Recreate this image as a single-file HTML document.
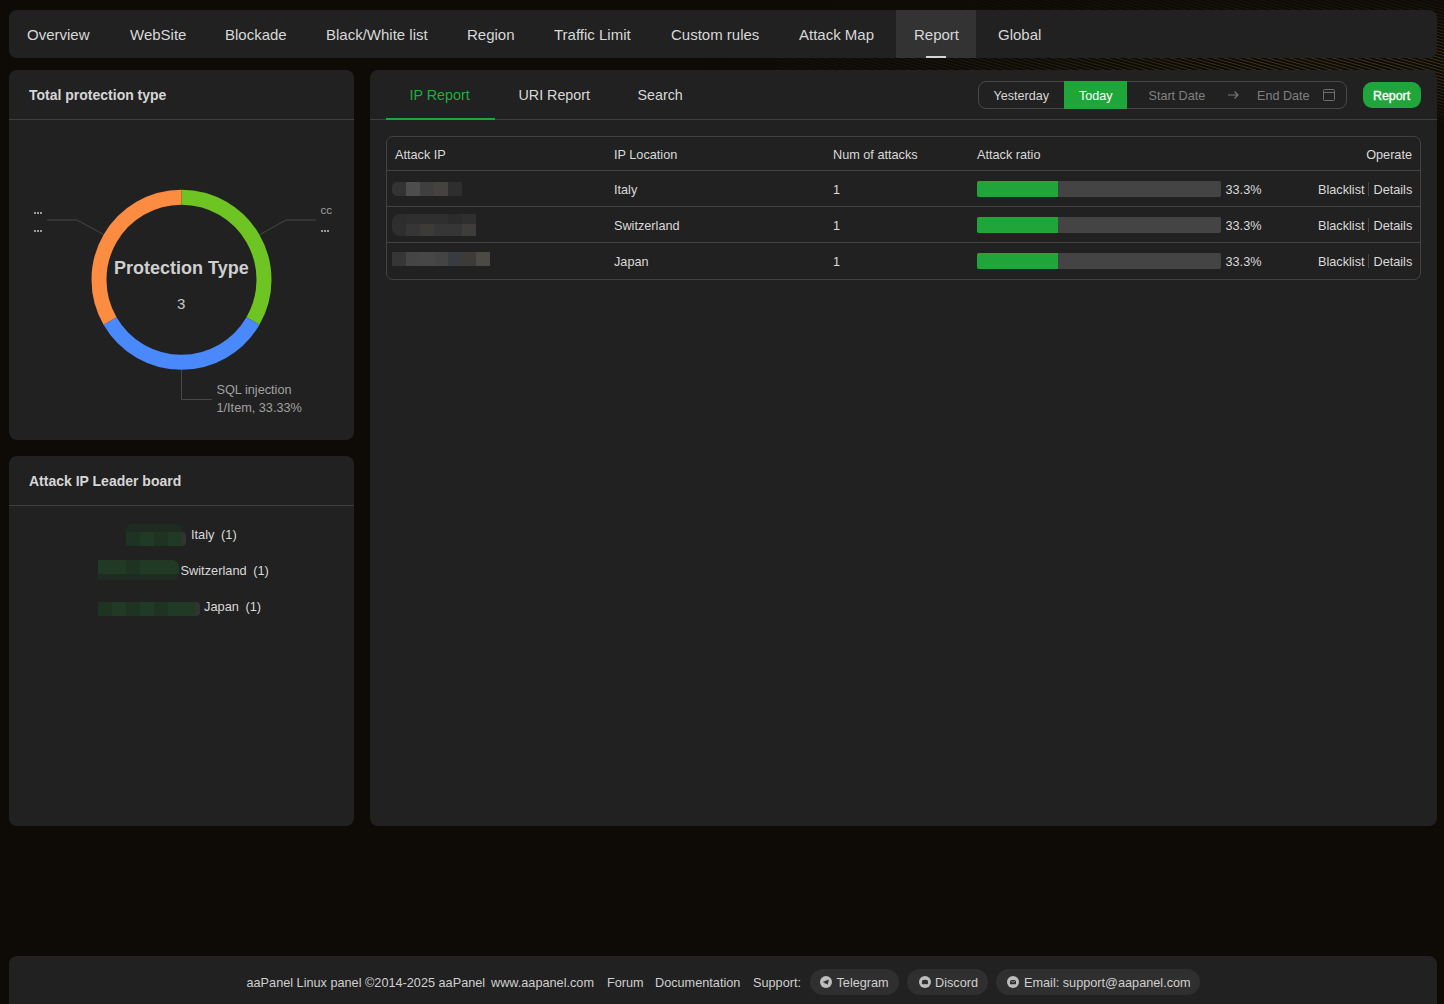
<!DOCTYPE html>
<html><head><meta charset="utf-8">
<style>
*{box-sizing:border-box;margin:0;padding:0}
html,body{width:1444px;height:1004px;overflow:hidden}
body{background:#0e0b07;font-family:"Liberation Sans",sans-serif;position:relative;color:#d4d4d4}
.abs{position:absolute}
.panel{position:absolute;background:#212121;border-radius:8px}
.t{position:absolute;white-space:nowrap;line-height:1}
.nav .t{font-size:15px;color:#d8d8d8;top:16.5px}
.hdr{font-size:14px;font-weight:bold;color:#d6d6d6}
.div{position:absolute;height:1px;background:#3f3f3f}
.tab{font-size:14.3px;color:#d8d8d8;top:18px}
.th,.td{font-size:12.7px;color:#dadada}
.bar{position:absolute;left:607px;width:244px;height:16px;background:#444444;border-radius:2px;overflow:hidden}
.bar i{position:absolute;left:0;top:0;bottom:0;width:81px;background:#20a53a}
.pix{position:absolute;height:14px}
.pix b{float:left;width:14px;height:100%}
.lb{font-size:12.8px;color:#dadada}
.ft{font-size:12.7px;color:#d0d0d0;top:21px}
.pill{position:absolute;top:13px;height:26px;border-radius:13px;background:#2f2f2f}
</style></head><body>
<!-- background texture -->
<div class="abs" style="left:560px;top:0;width:884px;height:125px;-webkit-mask-image:linear-gradient(90deg,transparent 16%,rgba(0,0,0,.4) 50%,#000 78%)">
 <svg class="abs" style="left:0;top:0;-webkit-mask-image:linear-gradient(180deg,rgba(0,0,0,.2) 0px,rgba(0,0,0,.35) 10px,#000 58px,#000 75px,rgba(0,0,0,.6) 100px,transparent 125px)" width="884" height="125"><path d="M0 -253.5L884 0.0M0 -250.4L884 3.1M0 -247.3L884 6.2M0 -244.2L884 9.3M0 -241.1L884 12.4M0 -238.0L884 15.5M0 -234.9L884 18.6M0 -231.8L884 21.7M0 -228.7L884 24.8M0 -225.6L884 27.9M0 -222.5L884 31.0M0 -219.4L884 34.1M0 -216.3L884 37.2M0 -213.2L884 40.3M0 -210.1L884 43.4M0 -207.0L884 46.5M0 -203.9L884 49.6M0 -200.8L884 52.7M0 -197.7L884 55.8M0 -194.6L884 58.9M0 -191.5L884 62.0M0 -188.4L884 65.1M0 -185.3L884 68.2M0 -182.2L884 71.3M0 -179.1L884 74.4M0 -176.0L884 77.5M0 -172.9L884 80.6M0 -169.8L884 83.7M0 -166.7L884 86.8M0 -163.6L884 89.9M0 -160.5L884 93.0M0 -157.4L884 96.1M0 -154.3L884 99.2M0 -151.2L884 102.3M0 -148.1L884 105.4M0 -145.0L884 108.5M0 -141.9L884 111.6M0 -138.8L884 114.7M0 -135.7L884 117.8M0 -132.6L884 120.9M0 -129.5L884 124.0M0 -126.4L884 127.1M0 -123.3L884 130.2M0 -120.2L884 133.3M0 -117.1L884 136.4M0 -114.0L884 139.5M0 -110.9L884 142.6M0 -107.8L884 145.7M0 -104.7L884 148.8M0 -101.6L884 151.9M0 -98.5L884 155.0M0 -95.4L884 158.1M0 -92.3L884 161.2M0 -89.2L884 164.3M0 -86.1L884 167.4M0 -83.0L884 170.5M0 -79.9L884 173.6M0 -76.8L884 176.7M0 -73.7L884 179.8M0 -70.6L884 182.9M0 -67.5L884 186.0M0 -64.4L884 189.1M0 -61.3L884 192.2M0 -58.2L884 195.3M0 -55.1L884 198.4M0 -52.0L884 201.5M0 -48.9L884 204.6M0 -45.8L884 207.7M0 -42.7L884 210.8M0 -39.6L884 213.9M0 -36.5L884 217.0M0 -33.4L884 220.1M0 -30.3L884 223.2M0 -27.2L884 226.3M0 -24.1L884 229.4M0 -21.0L884 232.5M0 -17.9L884 235.6M0 -14.8L884 238.7M0 -11.7L884 241.8M0 -8.6L884 244.9M0 -5.5L884 248.0M0 -2.4L884 251.1M0 0.7L884 254.2M0 3.8L884 257.3M0 6.9L884 260.4M0 10.0L884 263.5M0 13.1L884 266.6M0 16.2L884 269.7M0 19.3L884 272.8M0 22.4L884 275.9M0 25.5L884 279.0M0 28.6L884 282.1M0 31.7L884 285.2M0 34.8L884 288.3M0 37.9L884 291.4M0 41.0L884 294.5M0 44.1L884 297.6M0 47.2L884 300.7M0 50.3L884 303.8M0 53.4L884 306.9M0 56.5L884 310.0M0 59.6L884 313.1M0 62.7L884 316.2M0 65.8L884 319.3M0 68.9L884 322.4M0 72.0L884 325.5M0 75.1L884 328.6M0 78.2L884 331.7M0 81.3L884 334.8M0 84.4L884 337.9M0 87.5L884 341.0M0 90.6L884 344.1M0 93.7L884 347.2M0 96.8L884 350.3M0 99.9L884 353.4M0 103.0L884 356.5M0 106.1L884 359.6M0 109.2L884 362.7M0 112.3L884 365.8M0 115.4L884 368.9M0 118.5L884 372.0M0 121.6L884 375.1M0 124.7L884 378.2" stroke="rgba(110,98,50,0.55)" stroke-width="0.9" fill="none"/></svg>
</div>
<!-- NAV -->
<div class="panel nav" style="left:9px;top:10px;width:1428px;height:48px;">
  <div class="abs" style="left:887px;top:0;width:80px;height:48px;background:#333333"></div>
  <div class="abs" style="left:917px;top:46px;width:20px;height:2px;background:#d6d6d6"></div>
  <span class="t" style="left:18px">Overview</span>
  <span class="t" style="left:121px">WebSite</span>
  <span class="t" style="left:216px">Blockade</span>
  <span class="t" style="left:317px">Black/White list</span>
  <span class="t" style="left:458px">Region</span>
  <span class="t" style="left:545px">Traffic Limit</span>
  <span class="t" style="left:662px">Custom rules</span>
  <span class="t" style="left:790px">Attack Map</span>
  <span class="t" style="left:905px">Report</span>
  <span class="t" style="left:989px">Global</span>
</div>

<!-- LEFT PANEL 1 -->
<div class="panel" style="left:9px;top:70px;width:345px;height:370px;">
  <span class="t hdr" style="left:20px;top:17.6px">Total protection type</span>
  <div class="div" style="left:0;top:49px;width:345px"></div>
</div>
<svg class="abs" style="left:0;top:0" width="360" height="440" viewBox="0 0 360 440">
  <g fill="none" stroke-width="15">
    <path d="M181.5 197.2 A82.5 82.5 0 0 1 252.95 320.95" stroke="#6dc423"/>
    <path d="M252.95 320.95 A82.5 82.5 0 0 1 110.05 320.95" stroke="#4a89fb"/>
    <path d="M110.05 320.95 A82.5 82.5 0 0 1 181.5 197.2" stroke="#fb8c42"/>
  </g>
  <g fill="none" stroke="#474747" stroke-width="1">
    <polyline points="103.5,234.5 77,220 47,220"/>
    <polyline points="260,234.5 286,220 316,220"/>
    <polyline points="181.5,370 181.5,399.5 212,399.5"/>
  </g>
  <g fill="#9a9a9a">
    <rect x="34" y="212" width="2" height="2"/><rect x="37" y="212" width="2" height="2"/><rect x="40" y="212" width="2" height="2"/>
    <rect x="34" y="230" width="2" height="2"/><rect x="37" y="230" width="2" height="2"/><rect x="40" y="230" width="2" height="2"/>
    <rect x="321" y="230" width="2" height="2"/><rect x="324" y="230" width="2" height="2"/><rect x="327" y="230" width="2" height="2"/>
  </g>
</svg>
<span class="t" style="left:320.5px;top:204px;font-size:11.6px;color:#a0a0a0">cc</span>
<span class="t" style="left:114px;top:258.5px;font-size:18px;font-weight:bold;color:#cfcfcf">Protection Type</span>
<span class="t" style="left:177px;top:296px;font-size:15px;color:#c8c8c8">3</span>
<span class="t" style="left:216.5px;top:384px;font-size:12.7px;color:#a0a0a0">SQL injection</span>
<span class="t" style="left:216.5px;top:401.8px;font-size:12.7px;color:#a0a0a0">1/Item, 33.33%</span>

<!-- LEFT PANEL 2 -->
<div class="panel" style="left:9px;top:456px;width:345px;height:370px;">
  <span class="t hdr" style="left:20px;top:17.7px">Attack IP Leader board</span>
  <div class="div" style="left:0;top:49px;width:345px"></div>
</div>
<div class="pix" style="left:126px;top:524px;height:8px;width:56px;background:#1f2a21;border-radius:6px 6px 0 0"></div>
<div class="pix" style="left:126px;top:532px;"><b style="background:#1e3323"></b><b style="background:#213a26"></b><b style="background:#1f3323"></b><b style="background:#213a26"></b><b style="background:#333;width:4px;border-radius:0 5px 5px 0"></b></div>
<span class="t lb" style="left:191px;top:529.3px">Italy <span style="margin-left:3px">(1)</span></span>
<div class="pix" style="left:98px;top:560px;width:81px"><b style="background:#213a26"></b><b style="background:#213a26"></b><b style="background:#1f3323"></b><b style="background:#213a26"></b><b style="background:#213a26"></b><b style="background:#213a26;width:11px;border-radius:0 7px 0 0"></b></div>
<div class="pix" style="left:98px;top:574px;height:6px;width:81px;background:#1f2a21;border-radius:0 0 6px 0"></div>
<span class="t lb" style="left:180.5px;top:565px">Switzerland <span style="margin-left:3px">(1)</span></span>
<div class="pix" style="left:98px;top:602px;"><b style="background:#1f3323"></b><b style="background:#213a26"></b><b style="background:#1f3323"></b><b style="background:#213a26"></b><b style="background:#1f3323"></b><b style="background:#213a26"></b><b style="background:#215a26;background:#213a26;width:14px"></b><b style="background:#333;width:4px;border-radius:0 5px 5px 0"></b></div>
<span class="t lb" style="left:204px;top:601px">Japan <span style="margin-left:3px">(1)</span></span>

<!-- RIGHT PANEL -->
<div class="panel" style="left:370px;top:70px;width:1067px;height:756px;">
  <div class="div" style="left:0;top:49px;width:1067px"></div>
  <div class="abs" style="left:16px;top:48px;width:109px;height:2px;background:#20a53a"></div>
  <span class="t tab" style="left:39.5px;color:#22ad3c">IP Report</span>
  <span class="t tab" style="left:148.5px">URI Report</span>
  <span class="t tab" style="left:267.5px">Search</span>
  <!-- date group -->
  <div class="abs" style="left:608px;top:11px;width:369px;height:28px;border:1px solid #474747;border-radius:8px;"></div>
  <div class="abs" style="left:694px;top:11px;width:63px;height:28px;background:#20a53a"></div>
  <span class="t" style="left:623.5px;top:20.2px;font-size:12.6px;color:#d8d8d8">Yesterday</span>
  <span class="t" style="left:709px;top:20.2px;font-size:12.6px;color:#ffffff">Today</span>
  <span class="t" style="left:778.5px;top:20.2px;font-size:12.6px;color:#808080">Start Date</span>
  <span class="t" style="left:887px;top:20.2px;font-size:12.6px;color:#808080">End Date</span>
  <svg class="abs" style="left:856px;top:18px" width="14" height="14" viewBox="0 0 14 14"><path d="M2 7H12M8.5 3.5L12 7L8.5 10.5" fill="none" stroke="#7a7a7a" stroke-width="1.1"/></svg>
  <svg class="abs" style="left:952px;top:18px" width="14" height="14" viewBox="0 0 14 14"><rect x="1.5" y="1.5" width="11" height="11" rx="1" fill="none" stroke="#6e6e6e" stroke-width="1"/><path d="M1.5 4.5H12.5" stroke="#6e6e6e" stroke-width="1"/></svg>
  <div class="abs" style="left:993px;top:12px;width:58px;height:26px;background:#20a53a;border-radius:9px"></div>
  <span class="t" style="left:1003px;top:19.5px;font-size:12.4px;color:#ffffff;-webkit-text-stroke:0.35px #fff">Report</span>
  <!-- table -->
  <div class="abs" style="left:16px;top:66px;width:1035px;height:144px;border:1px solid #434343;border-radius:7px;"></div>
  <div class="div" style="left:17px;top:100px;width:1033px;background:#434343"></div>
  <div class="div" style="left:17px;top:136px;width:1033px;background:#434343"></div>
  <div class="div" style="left:17px;top:172px;width:1033px;background:#434343"></div>
  <span class="t th" style="left:25px;top:79.2px">Attack IP</span>
  <span class="t th" style="left:244px;top:79.2px">IP Location</span>
  <span class="t th" style="left:463px;top:79.2px">Num of attacks</span>
  <span class="t th" style="left:607px;top:79.2px">Attack ratio</span>
  <span class="t th" style="right:25px;top:79.2px">Operate</span>

  <div class="pix" style="left:22px;top:112px"><b style="background:#333;border-radius:5px 0 0 5px"></b><b style="background:#4d4d4d"></b><b style="background:#3f3f3f"></b><b style="background:#45433f"></b><b style="background:#2e2e2e"></b></div>
  <span class="t td" style="left:244px;top:114.2px">Italy</span>
  <span class="t td" style="left:463px;top:114.2px">1</span>
  <div class="bar" style="top:111px"><i></i></div>
  <span class="t td" style="left:855.5px;top:114.2px">33.3%</span>
  <span class="t td" style="left:948px;top:114.2px">Blacklist</span>
  <div class="abs" style="left:998px;top:112px;width:1px;height:14px;background:#444"></div>
  <span class="t td" style="left:1003.5px;top:114.2px">Details</span>

  <div class="abs" style="left:22px;top:144px;width:84px;height:22px;">
    <div class="pix" style="left:0;top:0;height:10px"><b style="background:#2d2d2d;border-radius:8px 0 0 0"></b><b style="background:#2f2f2f"></b><b style="background:#2f2f2f"></b><b style="background:#2f2f2f"></b><b style="background:#2b2b2b"></b><b style="background:#2f2f2f"></b></div>
    <div class="pix" style="left:0;top:10px;height:12px"><b style="background:#2f2f2f;border-radius:0 0 0 8px"></b><b style="background:#363636"></b><b style="background:#3c3b38"></b><b style="background:#363636"></b><b style="background:#363636"></b><b style="background:#3e3d3a"></b></div>
  </div>
  <span class="t td" style="left:244px;top:150.2px">Switzerland</span>
  <span class="t td" style="left:463px;top:150.2px">1</span>
  <div class="bar" style="top:147px"><i></i></div>
  <span class="t td" style="left:855.5px;top:150.2px">33.3%</span>
  <span class="t td" style="left:948px;top:150.2px">Blacklist</span>
  <div class="abs" style="left:998px;top:148px;width:1px;height:14px;background:#444"></div>
  <span class="t td" style="left:1003.5px;top:150.2px">Details</span>

  <div class="pix" style="left:22px;top:182px"><b style="background:#363636"></b><b style="background:#454545"></b><b style="background:#464746"></b><b style="background:#444444"></b><b style="background:#393c3f"></b><b style="background:#3c3b38"></b><b style="background:#4c4a44"></b></div>
  <span class="t td" style="left:244px;top:186.2px">Japan</span>
  <span class="t td" style="left:463px;top:186.2px">1</span>
  <div class="bar" style="top:183px"><i></i></div>
  <span class="t td" style="left:855.5px;top:186.2px">33.3%</span>
  <span class="t td" style="left:948px;top:186.2px">Blacklist</span>
  <div class="abs" style="left:998px;top:184px;width:1px;height:14px;background:#444"></div>
  <span class="t td" style="left:1003.5px;top:186.2px">Details</span>
</div>

<!-- FOOTER -->
<div class="panel" style="left:9px;top:956px;width:1428px;height:60px;">
  <span class="t ft" style="left:237.5px">aaPanel Linux panel ©2014-2025 aaPanel</span>
  <span class="t ft" style="left:482px">www.aapanel.com</span>
  <span class="t ft" style="left:598px">Forum</span>
  <span class="t ft" style="left:646px">Documentation</span>
  <span class="t ft" style="left:744px">Support:</span>
  <div class="pill" style="left:801px;width:89px"></div>
  <div class="pill" style="left:898px;width:81px"></div>
  <div class="pill" style="left:987px;width:204px"></div>
  <svg class="abs" style="left:811px;top:20px" width="12" height="12" viewBox="0 0 12 12"><circle cx="6" cy="6" r="6" fill="#bdbdbd"/><path d="M2.6 5.9L8.8 3.4L7.8 8.7L5.7 7.2L4.9 8.2L4.8 6.8Z" fill="#2f2f2f"/></svg>
  <svg class="abs" style="left:910px;top:20px" width="12" height="12" viewBox="0 0 12 12"><circle cx="6" cy="6" r="6" fill="#bdbdbd"/><path d="M3.3 4.3Q6 3.2 8.7 4.3L9.2 7.6Q8 8.5 7 8.5L6.6 7.9Q6 8 5.4 7.9L5 8.5Q4 8.5 2.8 7.6Z" fill="#2f2f2f"/></svg>
  <svg class="abs" style="left:998px;top:20px" width="12" height="12" viewBox="0 0 12 12"><circle cx="6" cy="6" r="6" fill="#bdbdbd"/><rect x="3" y="4" width="6" height="4.2" rx="0.5" fill="#2f2f2f"/><path d="M3.2 4.3L6 6.3L8.8 4.3" fill="none" stroke="#bdbdbd" stroke-width="0.7"/></svg>
  <span class="t ft" style="left:827.5px">Telegram</span>
  <span class="t ft" style="left:926px">Discord</span>
  <span class="t ft" style="left:1015px">Email: support@aapanel.com</span>
</div>
</body></html>
